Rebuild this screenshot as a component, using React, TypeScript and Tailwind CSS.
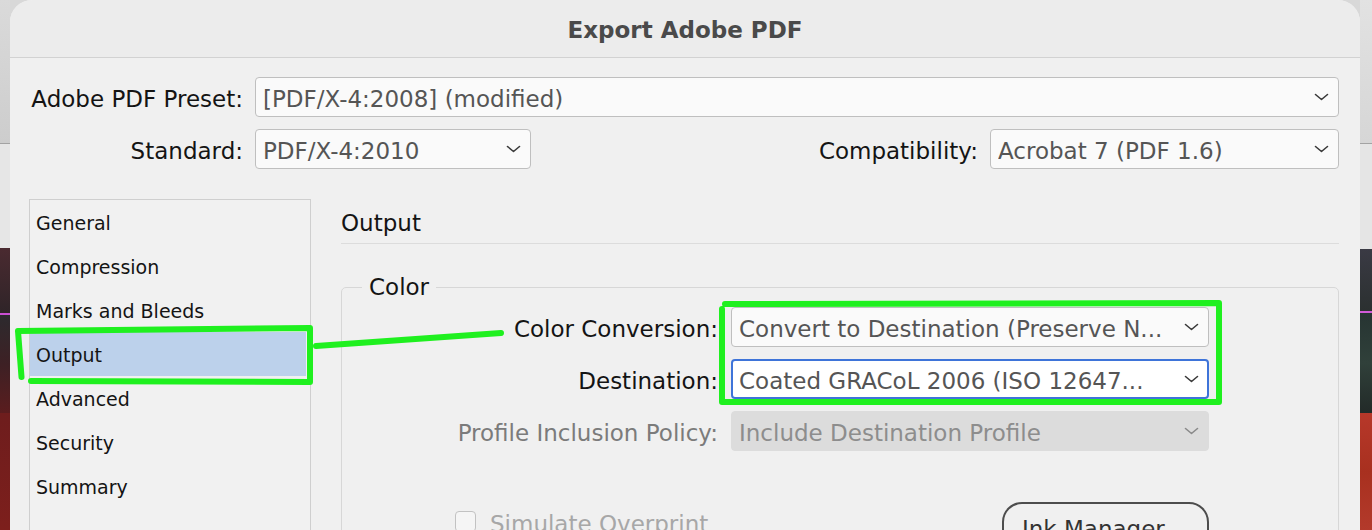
import React from "react";

function Chevron({ color = "#3a3a3a" }: { color?: string }) {
  return (
    <svg width="15" height="8" viewBox="0 0 15 8" fill="none" className="shrink-0">
      <polyline
        points="1.5,1.5 7.5,6.5 13.5,1.5"
        stroke={color}
        strokeWidth="1.6"
        strokeLinecap="round"
        strokeLinejoin="round"
      />
    </svg>
  );
}

type Variant = "normal" | "focus" | "disabled";

function Select({
  text,
  className = "",
  variant = "normal",
}: {
  text: string;
  className?: string;
  variant?: Variant;
}) {
  const box =
    variant === "focus"
      ? "bg-white border-2 border-[#3e74d9] pl-[6px] pr-[8px]"
      : variant === "disabled"
      ? "bg-[#dcdcdc] border border-[#dcdcdc] pl-[7px] pr-[9px]"
      : "bg-[#fafafa] border border-[#bfbfbf] pl-[7px] pr-[9px]";
  const txt =
    variant === "disabled" ? "text-[#8d8d8d]" : "text-[#555555]";
  return (
    <div
      className={`h-[40px] rounded-[4px] flex items-center ${box} ${className}`}
    >
      <span
        className={`flex-1 pt-[3px] whitespace-nowrap overflow-hidden text-[23px] leading-[28px] ${txt}`}
      >
        {text}
      </span>
      <Chevron color={variant === "disabled" ? "#8a8a8a" : "#3a3a3a"} />
    </div>
  );
}

const listItems = [
  "General",
  "Compression",
  "Marks and Bleeds",
  "Output",
  "Advanced",
  "Security",
  "Summary",
];

function LeftStrip() {
  return (
    <div className="w-[10px] h-full flex flex-col shrink-0">
      <div className="h-[143px] bg-gradient-to-b from-[#dadada] to-[#cdcdcd]" />
      <div className="h-[1px] bg-[#a3a3a3]" />
      <div className="h-[104px] bg-[#e6e6e6]" />
      <div className="h-[65px] bg-gradient-to-b from-[#4a2a30] to-[#2f2428]" />
      <div className="h-[2px] bg-[#c94fd2]" />
      <div className="h-[98px] bg-gradient-to-b from-[#2c2a2e] via-[#3d2024] to-[#5a1c1e]" />
      <div className="flex-1 bg-gradient-to-b from-[#6e1d1d] to-[#7d1f1c]" />
    </div>
  );
}

function RightStrip() {
  return (
    <div className="w-[12px] h-full flex flex-col shrink-0">
      <div className="h-[143px] bg-gradient-to-b from-[#e2e2e2] to-[#d6d6d6]" />
      <div className="h-[1px] bg-[#a3a3a3]" />
      <div className="h-[105px] bg-[#e5e5e5]" />
      <div className="h-[62px] bg-gradient-to-b from-[#3a3a44] to-[#2b3030]" />
      <div className="h-[2px] bg-[#d05ad8]" />
      <div className="h-[100px] bg-gradient-to-b from-[#263432] via-[#30403a] to-[#222a28]" />
      <div className="flex-1 bg-gradient-to-b from-[#b7382a] via-[#a8301f] to-[#b33a2b]" />
    </div>
  );
}

const label = "text-[23px] leading-[28px] pt-[3px] whitespace-nowrap";

export default function App() {
  return (
    <div className="relative w-[1372px] h-[530px] overflow-hidden flex bg-[#d8d8d8] font-['DejaVu_Sans',sans-serif] text-[#141414]">
      <LeftStrip />

      {/* Dialog */}
      <div className="w-[1350px] h-full flex flex-col bg-[#f0f0f0] rounded-t-[22px] overflow-hidden shrink-0">
        {/* Title bar */}
        <div className="h-[58px] shrink-0 border-b border-[#d2d2d2] bg-[#ececec] flex items-center justify-center pt-[2px]">
          <span className="text-[23px] leading-[28px] font-bold text-[#4a4a4a]">
            Export Adobe PDF
          </span>
        </div>

        <div className="flex flex-col pr-[21px]">
          {/* Row 1 */}
          <div className="mt-[19px] h-[40px] flex items-center">
            <div className={`w-[233px] text-right ${label}`}>
              Adobe PDF Preset:
            </div>
            <Select
              text="[PDF/X-4:2008] (modified)"
              className="ml-[12px] flex-1"
            />
          </div>

          {/* Row 2 */}
          <div className="mt-[12px] h-[40px] flex items-center">
            <div className={`w-[233px] text-right ${label}`}>Standard:</div>
            <Select text="PDF/X-4:2010" className="ml-[12px] w-[276px]" />
            <div className="flex-1" />
            <div className={label}>Compatibility:</div>
            <Select
              text="Acrobat 7 (PDF 1.6)"
              className="ml-[12px] w-[349px]"
            />
          </div>

          {/* Main */}
          <div className="mt-[30px] flex items-start">
            {/* Left list */}
            <div className="ml-[19px] w-[282px] h-[360px] shrink-0 border border-[#cfcfcf] bg-[#f1f1f1] flex flex-col">
              {listItems.map((item) => (
                <div
                  key={item}
                  className={`h-[44px] shrink-0 flex items-center pl-[6px] pt-[1px] text-[19px] leading-[24px] whitespace-nowrap ${
                    item === "Output" ? "bg-[#bcd1eb] mr-[4px]" : ""
                  }`}
                >
                  {item}
                </div>
              ))}
            </div>

            {/* Right content */}
            <div className="ml-[30px] flex-1 flex flex-col">
              <div className="h-[45px] border-b border-[#dcdcdc] flex items-center pt-[3px] text-[23px] leading-[28px]">
                Output
              </div>

              <fieldset className="mt-[29px] border border-[#d7d7d7] rounded-[5px] pt-[6px] pb-[40px]">
                <legend className="ml-[20px] px-[7px] text-[23px] leading-[28px]">
                  Color
                </legend>

                <div className="w-[867px] h-[40px] flex items-center">
                  <div className={`w-[376px] text-right ${label}`}>
                    Color Conversion:
                  </div>
                  <Select
                    text="Convert to Destination (Preserve N..."
                    className="ml-[13px] w-[478px]"
                  />
                </div>

                <div className="mt-[12px] w-[867px] h-[40px] flex items-center">
                  <div className={`w-[376px] text-right ${label}`}>
                    Destination:
                  </div>
                  <Select
                    text="Coated GRACoL 2006 (ISO 12647..."
                    className="ml-[13px] w-[478px]"
                    variant="focus"
                  />
                </div>

                <div className="mt-[12px] w-[867px] h-[40px] flex items-center">
                  <div className={`w-[376px] text-right text-[#7b7b7b] ${label}`}>
                    Profile Inclusion Policy:
                  </div>
                  <Select
                    text="Include Destination Profile"
                    className="ml-[13px] w-[478px]"
                    variant="disabled"
                  />
                </div>

                <div className="mt-[51px] w-[867px] flex items-start">
                  <div className="ml-[113px] mt-[9px] w-[21px] h-[21px] rounded-[4px] border border-[#c2c2c2] bg-[#f5f5f5] shrink-0" />
                  <div className="ml-[14px] mt-[8px] text-[23px] leading-[28px] text-[#a7a7a7] whitespace-nowrap">
                    Simulate Overprint
                  </div>
                  <div className="ml-auto w-[207px] h-[50px] border-2 border-[#4d4d4d] rounded-[20px] pt-[11px] pl-[18px] text-[23px] leading-[28px] text-[#333333] whitespace-nowrap">
                    Ink Manager...
                  </div>
                </div>
              </fieldset>
            </div>
          </div>
        </div>
      </div>

      <RightStrip />

      {/* Green annotations drawn on top of the screenshot */}
      <svg
        className="absolute left-0 top-0 pointer-events-none"
        width="1372"
        height="530"
        viewBox="0 0 1372 530"
        fill="none"
      >
        <g
          stroke="#1ff01f"
          strokeWidth="6"
          strokeLinecap="round"
          strokeLinejoin="round"
        >
          <path d="M21.5 377 L18 331 L310 328 L310 382 L31 381" />
          <path d="M316 346 L501 333" />
          <path d="M725 304 L1219 303 L1219 402 L722 402 L722 309" />
        </g>
      </svg>
    </div>
  );
}
